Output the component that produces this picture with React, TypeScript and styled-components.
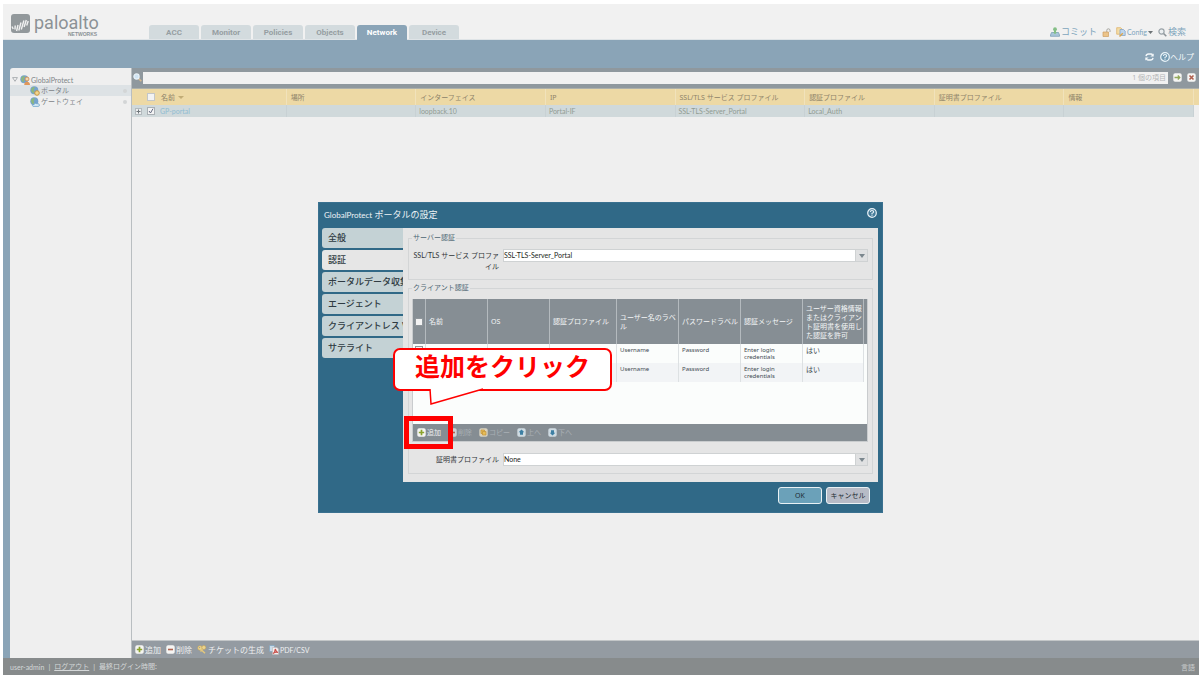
import React from "react";
import styled, { createGlobalStyle, css } from "styled-components";

const body = '"Noto Sans", "Noto Sans CJK JP", sans-serif';
const slim = '"Lato", "Noto Sans CJK JP", sans-serif';

const GlobalStyle = createGlobalStyle`
  * { box-sizing: border-box; }
  body { margin: 0; background: #fff; font-family: ${body}; font-size: 7px; line-height: 10px; color: #83898c; }
  button { font-family: inherit; border: 0; background: none; padding: 0; margin: 0; color: inherit; cursor: pointer; white-space: nowrap; }
  svg { display: block; flex: none; }
  table { border-collapse: separate; border-spacing: 0; table-layout: fixed; width: 100%; }
  th { font-weight: 400; text-align: left; }
`;

/* ---------- page frame ---------- */

const Page = styled.div`
  display: flex;
  flex-direction: column;
  min-height: 100vh;
  padding: 4px 2px 0 3px;
`;

const Header = styled.header`
  display: flex;
  align-items: flex-end;
  height: 36px;
  background: #f1f1f1;
  border-bottom: 1px solid #dfe4e7;
`;

const Brand = styled.div`
  display: flex;
  align-self: flex-start;
  gap: 4px;
  width: 146px;
  padding: 10px 0 0 8px;
`;

const BrandText = styled.div`
  position: relative;
  font-family: "Roboto", sans-serif;
  font-size: 18px;
  line-height: 18px;
  color: #8c9296;
`;

const BrandSub = styled.small`
  position: absolute;
  left: 34px;
  top: 18px;
  font-family: "Liberation Sans", sans-serif;
  font-size: 5px;
  font-weight: 700;
  line-height: 5px;
`;

const Nav = styled.nav`
  display: flex;
  gap: 2px;
`;

const NavTab = styled.button<{ $active?: boolean }>`
  width: 50px;
  height: 14px;
  border-radius: 3px 3px 0 0;
  font-family: "Roboto", sans-serif;
  font-size: 8px;
  font-weight: 700;
  line-height: 16px;
  color: ${(p) => (p.$active ? "#fff" : "#969ea2")};
  background: ${(p) => (p.$active ? "#8aa4b7" : "#d3dbde")};
  ${(p) => p.$active && css`margin-bottom: -1px; height: 15px;`}
`;

const HeaderActions = styled.div`
  display: flex;
  align-items: center;
  gap: 5px;
  height: 14px;
  margin-left: auto;
  padding-right: 13px;
`;

const ActionButton = styled.button`
  display: flex;
  align-items: center;
  gap: 1px;
  font-size: 9px;
  line-height: 12px;
  color: #7ea5bc;
`;

const HelpBar = styled.div`
  display: flex;
  justify-content: flex-end;
  align-items: center;
  gap: 6px;
  height: 28px;
  padding: 6px 5px 0 0;
  background: #8aa4b7;
`;

const HelpButton = styled.button`
  display: flex;
  align-items: center;
  font-size: 8px;
  line-height: 12px;
  color: #f4f8fa;
`;

const Workspace = styled.div`
  display: flex;
  flex: 1;
  padding-left: 7px;
  background: #8aa4b7;
`;

const Sidebar = styled.aside`
  width: 121px;
  padding-top: 6px;
  border-radius: 3px 0 0 0;
  background: #efefef;
`;

const TreeItem = styled.a<{ $depth: number; $selected?: boolean }>`
  display: flex;
  align-items: center;
  gap: 1px;
  height: 11px;
  padding: 0 4px 0 ${(p) => (p.$depth ? 20 : 2)}px;
  font-size: 7px;
  text-decoration: none;
  color: #7d8488;
  background: ${(p) => (p.$selected ? "#dde2e5" : "transparent")};
  & > svg:first-child { margin-right: ${(p) => (p.$depth ? 0 : 1)}px; }
`;

const TreeDot = styled.i`
  width: 4px;
  height: 4px;
  margin-left: auto;
  border-radius: 2px;
  background: #d3d5d6;
`;

const Main = styled.main`
  display: flex;
  flex-direction: column;
  flex: 1;
  min-width: 0;
  border-left: 1px solid #b9bec1;
  background: #efefef;
`;

const SearchBar = styled.div`
  display: flex;
  align-items: center;
  height: 21px;
  padding: 0 3px 1px 1px;
  background: #8f989e;
  border-bottom: 1px solid #aeb1ab;
`;

const SearchField = styled.label`
  display: flex;
  align-items: center;
  flex: 1;
  height: 12px;
  margin: 0 4px 0 1px;
  padding-right: 2px;
  background: #f1f1f1;
  color: #b4b6b7;
  font-size: 7px;
`;

const SearchInput = styled.input`
  flex: 1;
  min-width: 0;
  height: 10px;
  border: 0;
  outline: 0;
  background: transparent;
  font: inherit;
`;

const SquareButton = styled.button`
  width: 9px;
  height: 9px;
  margin-left: 1px;
  & + & { margin-left: 5px; }
`;

/* ---------- portal list ---------- */

const ListHead = styled.th`
  height: 16px;
  padding: 1px 0 0 4px;
  border-right: 1px solid #f1e2bb;
  background: #edd9a5;
  color: #8d8369;
  font-size: 7px;
  white-space: nowrap;
`;

const ListCell = styled.td`
  height: 12px;
  padding: 1px 0 0 3px;
  border-right: 1px solid #c8d1d4;
  background: #d0d9db;
  color: #919c93;
  font-family: ${slim};
  font-size: 7px;
  line-height: 11px;
  white-space: nowrap;
`;

const IconHead = styled(ListHead)`
  padding: 0;
  border: 0;
`;

const IconCell = styled(ListCell)`
  padding: 0;
  border: 0;
`;

const EndCell = styled.td`
  padding: 0;
  background: #efefef;
`;

const RowLink = styled.a`
  color: #8fbcd2;
  text-decoration: none;
`;

const Tick = styled.input.attrs({ type: "checkbox" })<{ $faded?: boolean }>`
  display: block;
  appearance: none;
  width: 8px;
  height: 8px;
  margin: 0 auto;
  border: 1px solid ${(p) => (p.$faded ? "#c3c6c8" : "#8f969b")};
  background: #f3f3f3;
  &:checked {
    border-color: #a9b0b4;
    background: #f4f4f4 url("data:image/svg+xml,%3Csvg xmlns='http://www.w3.org/2000/svg' viewBox='0 0 6 6'%3E%3Cpath d='M1 3l1.500 2L5 .7' fill='none' stroke='%23646b80'/%3E%3C/svg%3E") center / 6px 6px no-repeat;
  }
`;

const ExpandButton = styled.button`
  display: block;
  width: 7px;
  height: 7px;
  margin-left: 3px;
`;

const SortArrow = styled.i`
  display: inline-block;
  margin: 0 0 1px 3px;
  border: 3px solid transparent;
  border-top-color: #c1ac76;
  border-bottom: 0;
`;

const ListToolbar = styled.div`
  display: flex;
  align-items: center;
  gap: 5px;
  height: 18px;
  margin-top: auto;
  padding: 0 3px;
  background: #949ba2;
  border-top: 1px solid #c3c6c8;
`;

const ToolButton = styled.button<{ $faded?: boolean }>`
  display: flex;
  align-items: center;
  gap: 1px;
  font-size: 8px;
  line-height: 12px;
  color: ${(p) => (p.$faded ? "#a9b0b5" : "#eef0f1")};
`;

const Slim = styled.span<{ $size: number }>`
  font-family: ${slim};
  font-size: ${(p) => p.$size}px;
`;

const Footer = styled.footer`
  display: flex;
  align-items: center;
  gap: 3px;
  height: 17px;
  padding: 0 4px 0 7px;
  background: #878b8c;
  color: #d4d7d8;
  font-size: 7px;
  line-height: 12px;
`;

const FooterLink = styled.a`
  color: inherit;
`;

const Language = styled.button`
  margin-left: auto;
  font-size: 7px;
  color: #c9cccd;
`;

/* ---------- dialog ---------- */

const Overlay = styled.div`
  position: fixed;
  inset: 0;
  display: flex;
  align-items: center;
  justify-content: center;
  padding-top: 40px;
`;

const Dialog = styled.section`
  position: relative;
  width: 565px;
  background: #306987;
  border: 1px solid #3a7190;
  color: #3f4c54;
`;

const DialogTitle = styled.header`
  display: flex;
  align-items: center;
  justify-content: space-between;
  height: 25px;
  padding: 0 5px 2px;
`;

const TitleText = styled.h1`
  margin: 0;
  font-size: 9px;
  font-weight: 400;
  line-height: 14px;
  color: #edf3f6;
`;

const IconButton = styled.button`
  display: block;
  margin-bottom: 3px;
`;

const DialogBody = styled.div`
  display: flex;
  padding: 0 4px 0 3px;
`;

const SideTabs = styled.div`
  display: flex;
  flex-direction: column;
  gap: 2px;
  width: 81px;
`;

const SideTab = styled.button<{ $active?: boolean }>`
  height: 20px;
  padding-left: 6px;
  border-radius: 3px 0 0 3px;
  overflow: hidden;
  text-align: left;
  font-size: 9px;
  font-weight: 500;
  line-height: 20px;
  color: #2f3b42;
  background: ${(p) => (p.$active ? "#e6e6e6" : "#c4d2d5")};
`;

const Panel = styled.div`
  flex: 1;
  min-width: 0;
  display: flex;
  flex-direction: column;
  gap: 3px;
  padding: 5px 5px 8px;
  background: #e5e5e5;
`;

const Group = styled.fieldset`
  min-width: 0;
  margin: 0;
  padding: 6px 4px 7px 3px;
  border: 1px solid #d3d5d6;
`;

const GroupTitle = styled.legend`
  padding: 0 1px;
  font-size: 7px;
  line-height: 10px;
  color: #4d6673;
`;

const FieldRow = styled.div`
  display: flex;
  align-items: flex-start;
  gap: 4px;
`;

const FieldLabel = styled.label`
  width: 87px;
  padding-top: 1px;
  text-align: right;
  font-family: ${slim};
  font-size: 7px;
  line-height: 11px;
  color: #2f3437;
`;

const SelectBox = styled.div`
  display: flex;
  flex: 1;
  position: relative;
  height: 13px;
  border: 1px solid #cfd2d3;
  background: #fff;
`;

const Select = styled.select`
  flex: 1;
  appearance: none;
  border: 0;
  padding: 0;
  outline: 0;
  background: transparent;
  font-family: ${slim};
  font-size: 7px;
  line-height: 11px;
  color: #1c1f21;
`;

const SelectArrow = styled.span`
  position: absolute;
  right: 0;
  top: 0;
  bottom: 0;
  width: 12px;
  display: flex;
  align-items: center;
  justify-content: center;
  border-left: 1px solid #cfd2d3;
  background: #e0e1e2;
  pointer-events: none;
  &::after {
    content: "";
    border: 3px solid transparent;
    border-top: 4px solid #7b878e;
    border-bottom: 0;
  }
`;

const Grid = styled.div`
  margin-bottom: 11px;
  border: 1px solid #c9ccce;
  border-top: 0;
  background: #fbfdfc;
`;

const GridScroll = styled.div`
  height: 125px;
`;

const GridHead = styled.th`
  height: 45px;
  padding: 0 0 0 3px;
  border-right: 1px solid #b4babe;
  background: #868e94;
  color: #f4f6f7;
  font-size: 7px;
  line-height: 9px;
`;

const GridCell = styled.td`
  height: 19px;
  padding: 3px 0 0 3px;
  border-right: 1px solid #dde1e3;
  vertical-align: top;
  font-size: 6px;
  line-height: 7px;
  color: #3f4b53;
  &:first-child { padding: 2px 0 0; }
  &:nth-last-child(1) { font-size: 7px; }
`;

const GridRow = styled.tr`
  &:nth-child(even) > td { background: #f2f4f6; }
`;

const TickHead = styled(GridHead)`
  padding: 0;
`;

const EndHead = styled(GridHead)`
  padding: 0;
  border: 0;
`;

const GridToolbar = styled.div`
  display: flex;
  align-items: center;
  gap: 7px;
  height: 17px;
  padding-left: 4px;
  background: #858d93;
  ${ToolButton} { font-size: 7px; }
`;

const DialogFooter = styled.footer`
  display: flex;
  justify-content: flex-end;
  gap: 4px;
  padding: 5px 12px 8px 0;
`;

const DialogButton = styled.button<{ $primary?: boolean }>`
  width: 44px;
  height: 17px;
  border: 1px solid #e9f1f4;
  border-radius: 3px;
  font-size: 7px;
  line-height: 15px;
  color: #1d2b33;
  background: ${(p) => (p.$primary ? "#6ba1b9" : "#b7bbc6")};
`;

/* ---------- annotation ---------- */

const Callout = styled.div`
  position: absolute;
  left: 74px;
  top: 145px;
  width: 219px;
  height: 43px;
  border: 2px solid #f00;
  border-radius: 7px;
  background: #fff;
  color: #f00;
  text-align: center;
  font-family: "Noto Sans CJK JP", sans-serif;
  font-size: 25px;
  font-weight: 700;
  line-height: 30px;
  white-space: nowrap;
`;

const CalloutTail = styled.svg`
  position: absolute;
  left: 34px;
  top: 38px;
`;

const Highlight = styled.div`
  position: absolute;
  left: 85px;
  top: 213px;
  width: 49px;
  height: 33px;
  border: 5px solid #f00;
  pointer-events: none;
`;

/* ---------- icons ---------- */

const BrandMark = () => (
  <svg width="19" height="19" viewBox="0 0 19 19">
    <rect width="19" height="19" rx="3" fill="#92989b" />
    <g stroke="#f1f1f1" strokeWidth="1.400" fill="none">
      <path d="M1 12.500l1.200 2.500M4.200 11.500l-.2 4M7 11L5.600 17M10 8.500L7.800 16.500M12.900 6.500l-2.600 9M15.300 6l-2.200 7M17.200 7l-1.500 4.500" />
    </g>
  </svg>
);

type Mark = "plus" | "minus" | "up" | "down" | "go" | "close" | "copy";

const marks: Record<Mark, React.ReactNode> = {
  plus: <path d="M4.500 1.800v5.400M1.800 4.500h5.400" stroke="#8ba32c" strokeWidth="1.700" />,
  minus: <path d="M2 4.500h5" stroke="#b0624f" strokeWidth="1.600" />,
  up: <path d="M4.500 1.500L7.300 4.300H6V6.800H3V4.300H1.700z" fill="#3d7fa3" />,
  down: <path d="M4.500 7.500L7.300 4.700H6V2.200H3v2.500H1.700z" fill="#3d7fa3" />,
  go: <path d="M1.500 4.500h5M4.800 2.500l2 2-2 2" stroke="#93a95a" strokeWidth="1.300" fill="none" />,
  close: <path d="M2.500 2.500l4 4M6.500 2.500l-4 4" stroke="#b0604f" strokeWidth="1.600" />,
  copy: <path d="M2 2h3.500v1.500H7V7H3.500V5.500H2zM3.500 3.500v2M3.500 3.500h2" fill="#e7bd57" stroke="#c2923a" strokeWidth=".7" />,
};

const BoxIcon = ({ kind, bg = "#f5f5f3" }: { kind: Mark; bg?: string }) => (
  <svg width="9" height="9" viewBox="0 0 9 9">
    <rect x=".3" y=".3" width="8.400" height="8.400" rx="1.800" fill={bg} />
    {marks[kind]}
  </svg>
);

const GlobeIcon = ({ kind }: { kind: "user" | "portal" | "gateway" }) => (
  <svg width="10" height="10" viewBox="0 0 10 10">
    <circle cx="4.300" cy="4.300" r="4" fill="#76a3cd" />
    <path d="M1 3L3.500.800 5 1.800 3.500 3.800 4.200 5.500 3.200 7.500 1.500 5.500z" fill="#8db87c" />
    {kind === "user" && (
      <g>
        <circle cx="7" cy="4" r="2" fill="#f1d6b0" stroke="#cc8748" strokeWidth=".8" />
        <path d="M4.200 10q.2-3.200 2.900-3.200T10 10z" fill="#e0975a" />
      </g>
    )}
    {kind === "portal" && <circle cx="7" cy="7" r="2.300" fill="#f0d690" stroke="#c9963e" strokeWidth="1" />}
    {kind === "gateway" && <path d="M2.500 8.800q0-1.600 1.700-1.500.8-1.700 2.500-.6 2.800-.4 2.800 1.400 0 1.300-1.500 1.300H4q-1.500 0-1.500-.6z" fill="#d9ecf7" stroke="#5e9bc4" strokeWidth=".7" />}
  </svg>
);

const MagnifierIcon = ({ blue }: { blue?: boolean }) => (
  <svg width="9" height="9" viewBox="0 0 9 9">
    <path d="M5.300 5.300L8.300 8.300" stroke={blue ? "#d8b98d" : "#8d9499"} strokeWidth="1.600" />
    <circle cx="3.500" cy="3.500" r="2.600" fill={blue ? "#cfe4f3" : "#eceff1"} stroke={blue ? "#e9f2f8" : "#9aa3a8"} strokeWidth="1.200" />
  </svg>
);

const CommitIcon = () => (
  <svg width="10" height="10" viewBox="0 0 10 10">
    <path d="M1.500 5.500h7L9.500 8v1.300h-9V8z" fill="#a9c6d9" stroke="#7298b3" strokeWidth=".7" />
    <circle cx="5" cy="2.200" r="1.900" fill="#84bf86" />
    <path d="M4 3h2v2.200h1L5 7.200 3 5.200h1z" fill="#84bf86" />
  </svg>
);

const LockIcon = () => (
  <svg width="9" height="9" viewBox="0 0 9 9">
    <path d="M4.800 4V2.300q0-1.500 1.600-1.500T8 2.300V4" fill="none" stroke="#a7a59f" strokeWidth="1" />
    <path d="M1 4h5.500v4.500H1z" fill="#ecc48a" stroke="#cf9f63" strokeWidth=".7" />
  </svg>
);

const ConfigIcon = () => (
  <svg width="10" height="10" viewBox="0 0 10 10">
    <path d="M.7.7h4l1.500 1.500v5H.7z" fill="#f5dda6" stroke="#dcae60" strokeWidth=".7" />
    <path d="M4 2.500h3.500L9.200 4.200V8.500H4z" fill="#bdd5ec" stroke="#7b9fc6" strokeWidth=".7" />
    <path d="M3.500 9.500L6.800 6.200" stroke="#dca54a" strokeWidth="1.400" />
  </svg>
);

const CaretIcon = () => (
  <svg width="5" height="3" viewBox="0 0 5 3">
    <path d="M0 0h5L2.500 3z" fill="#6d7376" />
  </svg>
);

const RefreshIcon = () => (
  <svg width="9" height="8" viewBox="0 0 9 8">
    <path d="M1 3.200Q1.300 1 3.500 1H6q1.200 0 1.500 1M8 4.800Q7.700 7 5.500 7H3Q1.800 7 1.500 6" fill="none" stroke="#f4f8fa" strokeWidth="1.300" />
    <path d="M8.700.600v3H5.400zM.3 7.400v-3h3.300z" fill="#f4f8fa" />
  </svg>
);

const HelpIcon = () => (
  <svg width="10" height="10" viewBox="0 0 10 10">
    <circle cx="5" cy="5" r="4.300" fill="#5b8fae" fillOpacity=".5" stroke="#eaf3f8" strokeWidth="1.200" />
    <path d="M3.400 4q0-1.500 1.600-1.500T6.600 3.900Q6.600 4.600 5 5.300v.9M5 6.800v1" fill="none" stroke="#eaf3f8" strokeWidth="1.100" />
  </svg>
);

const TicketIcon = () => (
  <svg width="10" height="9" viewBox="0 0 10 9">
    <circle cx="3" cy="3" r="2.300" fill="#ecd48c" stroke="#c4a45a" strokeWidth=".6" />
    <circle cx="6.800" cy="2.500" r="2" fill="#ecd48c" stroke="#c4a45a" strokeWidth=".6" />
    <path d="M4 4.500L8 8.300M5.500 4.300L3.500 6.500" stroke="#e4c87c" strokeWidth="1.500" />
    <circle cx="2.600" cy="2.600" r=".7" fill="#949ba2" />
  </svg>
);

const PdfIcon = () => (
  <svg width="10" height="10" viewBox="0 0 10 10">
    <path d="M.5.500h5v6h-5z" fill="#c9dcea" stroke="#7ea2bd" strokeWidth=".7" />
    <path d="M3.500 2.500H8L9.500 4v5.500h-6z" fill="#f3eeee" stroke="#bdb5b5" strokeWidth=".6" />
    <path d="M4 8.500q2-1 2.300-4.500Q7 7 9 7.500 6.500 6.500 4 8.500" fill="none" stroke="#c9514c" strokeWidth="1.200" />
  </svg>
);

const ExpandIcon = () => (
  <svg width="7" height="7" viewBox="0 0 7 7">
    <rect x=".5" y=".5" width="6" height="6" fill="#eceeef" stroke="#b2b9bd" />
    <path d="M3.500 1.500v4M1.500 3.500h4" stroke="#70777b" />
  </svg>
);

const TreeArrow = () => (
  <svg width="6" height="5" viewBox="0 0 6 5">
    <path d="M.6.600h4.800L3 4.300z" fill="#f4f4f4" stroke="#9ba0a3" strokeWidth=".8" />
  </svg>
);

/* ---------- data ---------- */

const navItems = ["ACC", "Monitor", "Policies", "Objects", "Network", "Device"];

const listColumns = ["名前", "場所", "インターフェイス", "IP", "SSL/TLS サービス プロファイル", "認証プロファイル", "証明書プロファイル", "情報"];
const portal = ["GP-portal", "", "loopback.10", "Portal-IF", "SSL-TLS-Server_Portal", "Local_Auth", "", ""];

const sideTabs = ["全般", "認証", "ポータルデータ収集", "エージェント", "クライアントレス VPN", "サテライト"];

const authColumns = [
  { title: "名前", width: 62 },
  { title: "OS", width: 62 },
  { title: "認証プロファイル", width: 67 },
  { title: "ユーザー名のラベル", width: 62 },
  { title: "パスワードラベル", width: 62 },
  { title: "認証メッセージ", width: 62 },
  { title: "ユーザー資格情報またはクライアント証明書を使用した認証を許可", width: 61 },
];

const authRows = [
  ["", "", "", "Username", "Password", "Enter login credentials", "はい"],
  ["", "", "", "Username", "Password", "Enter login credentials", "はい"],
];

function PortalList() {
  return (
    <table>
      <colgroup>
        <col style={{ width: 12 }} />
        <col style={{ width: 13 }} />
        {listColumns.map((c) => <col key={c} />)}
        <col style={{ width: 5 }} />
      </colgroup>
      <thead>
        <tr>
          <IconHead />
          <IconHead><Tick $faded aria-label="すべて選択" /></IconHead>
          {listColumns.map((c, i) => (
            <ListHead key={c}>{c}{i === 0 && <SortArrow />}</ListHead>
          ))}
          <IconHead />
        </tr>
      </thead>
      <tbody>
        <tr>
          <IconCell><ExpandButton aria-label="展開"><ExpandIcon /></ExpandButton></IconCell>
          <IconCell><Tick defaultChecked aria-label="GP-portal" /></IconCell>
          {portal.map((v, i) => (
            <ListCell key={i}>{i === 0 ? <RowLink href="#portal">{v}</RowLink> : v}</ListCell>
          ))}
          <EndCell />
        </tr>
      </tbody>
    </table>
  );
}

function AuthGrid() {
  return (
    <Grid>
      <GridScroll>
        <table>
          <colgroup>
            <col style={{ width: 13 }} />
            {authColumns.map((c) => <col key={c.title} style={{ width: c.width }} />)}
            <col />
          </colgroup>
          <thead>
            <tr>
              <TickHead><Tick aria-label="すべて選択" /></TickHead>
              {authColumns.map((c) => <GridHead key={c.title}>{c.title}</GridHead>)}
              <EndHead />
            </tr>
          </thead>
          <tbody>
            {authRows.map((row, r) => (
              <GridRow key={r}>
                <GridCell><Tick aria-label={`行 ${r + 1}`} /></GridCell>
                {row.map((v, i) => <GridCell key={i}>{v}</GridCell>)}
              </GridRow>
            ))}
          </tbody>
        </table>
      </GridScroll>
      <GridToolbar>
        <ToolButton><BoxIcon kind="plus" />追加</ToolButton>
        <ToolButton $faded><BoxIcon kind="minus" bg="#cfd3d6" />削除</ToolButton>
        <ToolButton $faded><BoxIcon kind="copy" bg="#d9d3c0" />コピー</ToolButton>
        <ToolButton $faded><BoxIcon kind="up" bg="#cfdbe2" />上へ</ToolButton>
        <ToolButton $faded><BoxIcon kind="down" bg="#cfdbe2" />下へ</ToolButton>
      </GridToolbar>
    </Grid>
  );
}

function Combo({ id, label, value }: { id: string; label: string; value: string }) {
  return (
    <FieldRow>
      <FieldLabel htmlFor={id}>{label}</FieldLabel>
      <SelectBox>
        <Select id={id} defaultValue={value}><option>{value}</option></Select>
        <SelectArrow />
      </SelectBox>
    </FieldRow>
  );
}

export default function App() {
  return (
    <>
      <GlobalStyle />
      <Page>
        <Header>
          <Brand>
            <BrandMark />
            <BrandText>paloalto<BrandSub>NETWORKS</BrandSub></BrandText>
          </Brand>
          <Nav>
            {navItems.map((n) => <NavTab key={n} $active={n === "Network"}>{n}</NavTab>)}
          </Nav>
          <HeaderActions>
            <ActionButton><CommitIcon />コミット</ActionButton>
            <ActionButton aria-label="ロック"><LockIcon /></ActionButton>
            <ActionButton><ConfigIcon /><Slim $size={7}>Config</Slim><CaretIcon /></ActionButton>
            <ActionButton><MagnifierIcon />検索</ActionButton>
          </HeaderActions>
        </Header>
        <HelpBar>
          <HelpButton aria-label="更新"><RefreshIcon /></HelpButton>
          <HelpButton><HelpIcon />ヘルプ</HelpButton>
        </HelpBar>
        <Workspace>
          <Sidebar>
            <TreeItem href="#globalprotect" $depth={0}><TreeArrow /><GlobeIcon kind="user" /><Slim $size={7}>GlobalProtect</Slim></TreeItem>
            <TreeItem href="#portal" $depth={1} $selected><GlobeIcon kind="portal" />ポータル<TreeDot /></TreeItem>
            <TreeItem href="#gateway" $depth={1}><GlobeIcon kind="gateway" />ゲートウェイ<TreeDot /></TreeItem>
          </Sidebar>
          <Main>
            <SearchBar>
              <MagnifierIcon blue />
              <SearchField><SearchInput aria-label="検索" />1 個の項目</SearchField>
              <SquareButton aria-label="適用"><BoxIcon kind="go" /></SquareButton>
              <SquareButton aria-label="クリア"><BoxIcon kind="close" /></SquareButton>
            </SearchBar>
            <PortalList />
            <ListToolbar>
              <ToolButton><BoxIcon kind="plus" />追加</ToolButton>
              <ToolButton><BoxIcon kind="minus" />削除</ToolButton>
              <ToolButton><TicketIcon />チケットの生成</ToolButton>
              <ToolButton><PdfIcon /><Slim $size={7}>PDF/CSV</Slim></ToolButton>
            </ListToolbar>
          </Main>
        </Workspace>
        <Footer>
          <Slim $size={7}>user-admin</Slim>
          <span>|</span>
          <FooterLink href="#logout">ログアウト</FooterLink>
          <span>|</span>
          <span>最終ログイン時間:</span>
          <Language>言語</Language>
        </Footer>
      </Page>

      <Overlay>
        <Dialog role="dialog" aria-labelledby="dialog-title">
          <DialogTitle>
            <TitleText id="dialog-title"><Slim $size={8}>GlobalProtect</Slim> ポータルの設定</TitleText>
            <IconButton aria-label="ヘルプ"><HelpIcon /></IconButton>
          </DialogTitle>
          <DialogBody>
            <SideTabs>
              {sideTabs.map((t) => <SideTab key={t} $active={t === "認証"}>{t}</SideTab>)}
            </SideTabs>
            <Panel>
              <Group>
                <GroupTitle>サーバー認証</GroupTitle>
                <Combo id="tls-profile" label="SSL/TLS サービス プロファイル" value="SSL-TLS-Server_Portal" />
              </Group>
              <Group>
                <GroupTitle>クライアント認証</GroupTitle>
                <AuthGrid />
                <Combo id="cert-profile" label="証明書プロファイル" value="None" />
              </Group>
            </Panel>
          </DialogBody>
          <DialogFooter>
            <DialogButton $primary>OK</DialogButton>
            <DialogButton>キャンセル</DialogButton>
          </DialogFooter>
          <Callout>
            追加をクリック
            <CalloutTail width="56" height="18" viewBox="0 0 56 18">
              <path d="M1 0L2 16L54 1V0z" fill="#fff" />
              <path d="M1 1L2 16L54 1" fill="none" stroke="#f00" strokeWidth="1.500" />
            </CalloutTail>
          </Callout>
          <Highlight />
        </Dialog>
      </Overlay>
    </>
  );
}
